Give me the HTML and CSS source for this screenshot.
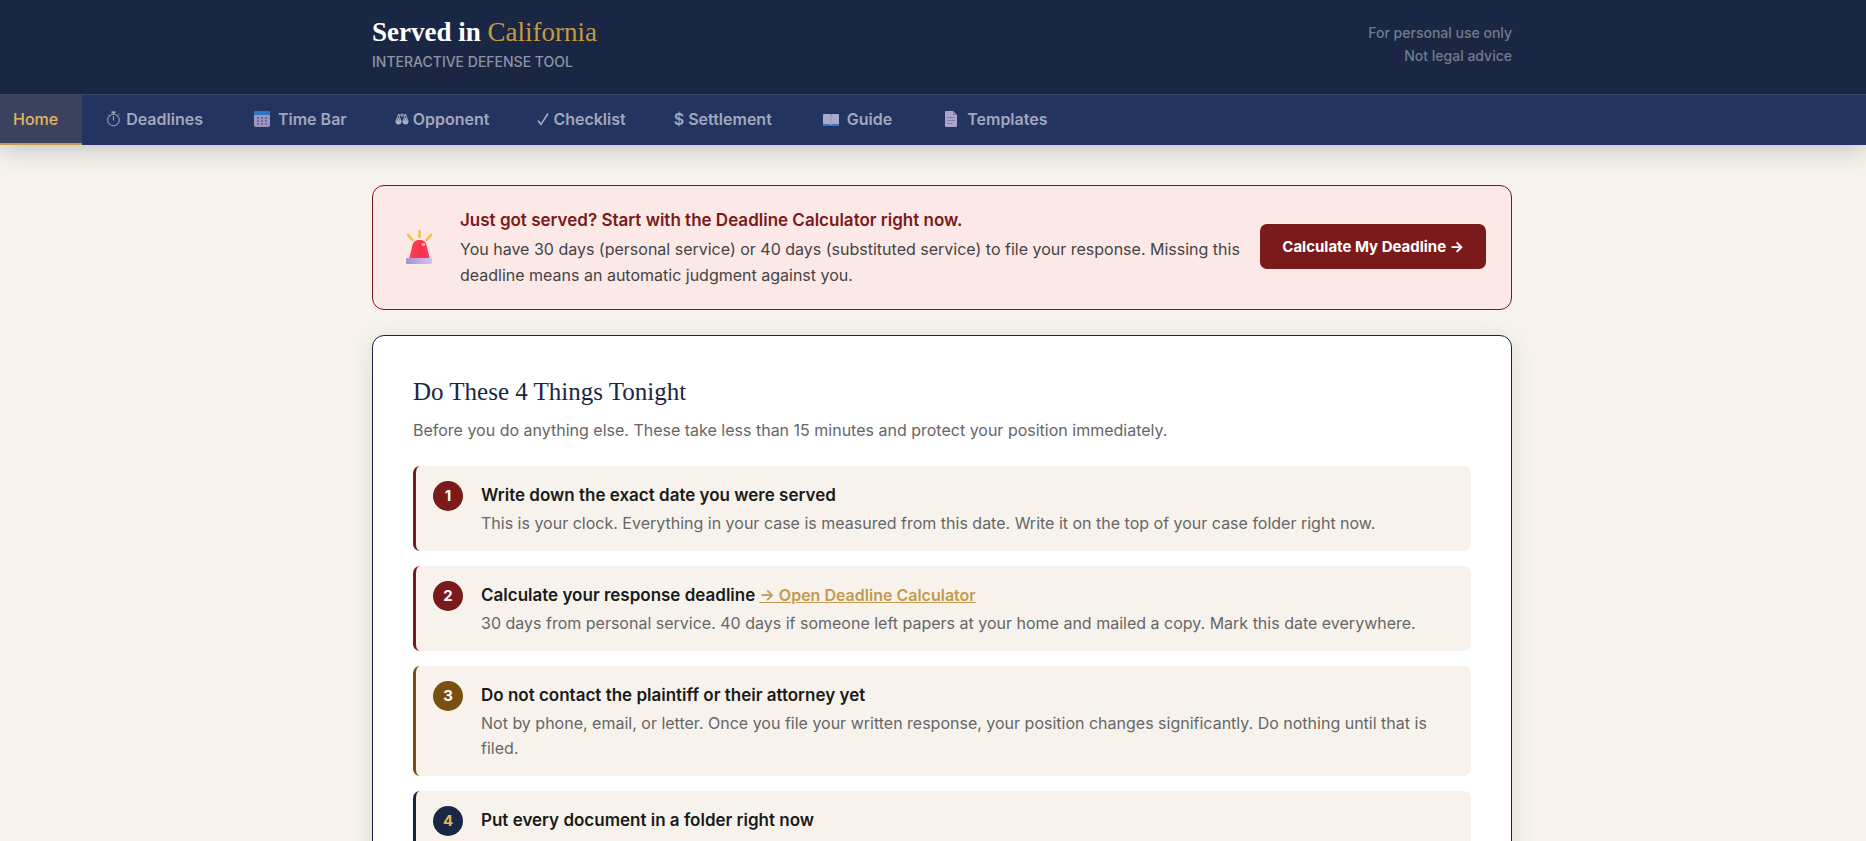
FILE: index.html
```html
<!DOCTYPE html>
<html lang="en">
<head>
    <meta charset="UTF-8">
    <meta name="viewport" content="width=device-width, initial-scale=1.0">
    <title>Served in California</title>
    <link rel="stylesheet" href="styles.css">
</head>
<body>
    <header class="site-header">
        <div class="header-inner">
            <div>
                <div class="logo">Served in <span>California</span></div>
                <div class="tagline">Interactive Defense Tool</div>
            </div>
            <div class="header-note">For personal use only<br>Not legal advice</div>
        </div>
        <nav class="tabs">
            <button class="tab active">Home</button>
            <button class="tab">
                <svg class="icon-sm" width="16" height="16" viewBox="0 0 16 16" fill="none" stroke="#a7aec0"><circle cx="7.5" cy="9" r="5.8"/><path d="M7.5 9.5V5M7.5 3V1.5M11.8 4.6l1.4-1.4M3.3 4.6l-1-1"/><path d="M5.5 1.3h4" stroke-width="1.8"/></svg>
                Deadlines
            </button>
            <button class="tab">
                <svg class="icon-lg" width="22" height="18" viewBox="0 0 22 18"><rect x="3" y="1" width="16" height="16" rx="2" fill="#9c94bd"/><path d="M3 5V3a2 2 0 0 1 2-2h12a2 2 0 0 1 2 2v2z" fill="#2b78c5"/><g fill="#716d9d"><path d="M6 7h2v2H6zM10 7h2v2h-2zM14 7h2v2h-2zM6 10h2v2H6zM10 10h2v2h-2zM14 10h2v2h-2zM6 13h2v2H6zM10 13h2v2h-2zM14 13h2v2h-2z"/></g></svg>
                Time Bar
            </button>
            <button class="tab">
                <svg class="icon-sm" width="14" height="14" viewBox="0 0 14 14" fill="#a7aec0"><path d="M3.5 3h7M7 1.5V5M3.5 2L1 9.5M3.5 2L6 9.5M10.5 2L8 9.5M10.5 2L13 9.5" fill="none" stroke="#a7aec0"/><path d="M.5 8.5h6c0 3-1 4-3 4s-3-1-3-4zM7.5 8.5h6c0 3-1 4-3 4s-3-1-3-4zM2.5 6h2v3h-2zM9.5 6h2v3h-2z"/></svg>
                Opponent
            </button>
            <button class="tab">
                <svg class="icon-sm" width="12" height="14" viewBox="0 0 12 14" fill="none" stroke="#a7aec0" stroke-width="1.5"><path d="M1 8.5l3 4L11 1.5"/></svg>
                Checklist
            </button>
            <button class="tab">$ Settlement</button>
            <button class="tab">
                <svg class="icon-lg" width="22" height="16" viewBox="0 0 22 16"><path d="M3 4h16v11H3z" fill="#3079b8"/><path d="M4 3h6l1 1 1-1h6a1 1 0 0 1 1 1v9h-7l-1 1-1-1H3V4a1 1 0 0 1 1-1z" fill="#aaa8cd"/><path d="M10 3.5h2v10h-2z" fill="#a0a0c1"/></svg>
                Guide
            </button>
            <button class="tab">
                <svg class="icon-lg" width="22" height="18" viewBox="0 0 22 18"><path d="M5 2a1 1 0 0 1 1-1h7l4 4v11a1 1 0 0 1-1 1H6a1 1 0 0 1-1-1z" fill="#a9a5cc"/><path d="M13 1v4h4z" fill="#8580aa"/><path d="M7 7.5h8M7 10.5h8M7 13.5h5" stroke="#827da8"/></svg>
                Templates
            </button>
        </nav>
    </header>

    <main class="content">
        <section class="alert">
            <svg class="siren" width="32" height="38" viewBox="0 0 32 38">
                <defs>
                    <linearGradient id="dome" x1="0" x2="1"><stop offset="0" stop-color="#ff4258"/><stop offset="0.6" stop-color="#f92f49"/><stop offset="1" stop-color="#ef4770"/></linearGradient>
                    <linearGradient id="base" x1="0" x2="1"><stop offset="0" stop-color="#a893c6"/><stop offset="1" stop-color="#d3c3f5"/></linearGradient>
                </defs>
                <path d="M5 7l4.500 5M16.500 3v6M28 7l-4.500 5" stroke="#f6bf43" stroke-width="2.600" stroke-linecap="round"/>
                <path d="M6 31l3.500-14q1-5 7-5t7 5L27 31z" fill="url(#dome)"/>
                <ellipse cx="20.500" cy="16.500" rx="2" ry="1.800" fill="#ff9dab"/>
                <rect x="3" y="30" width="26" height="6" rx="1" fill="url(#base)"/>
            </svg>
            <div class="alert-text">
                <h2>Just got served? Start with the Deadline Calculator right now.</h2>
                <p>You have 30 days (personal service) or 40 days (substituted service) to file your response. Missing this deadline means an automatic judgment against you.</p>
            </div>
            <button class="alert-btn">Calculate My Deadline →</button>
        </section>

        <section class="card">
            <h1>Do These 4 Things Tonight</h1>
            <p class="intro">Before you do anything else. These take less than 15 minutes and protect your position immediately.</p>

            <div class="steps">
                <div class="step">
                    <div class="num">1</div>
                    <div>
                        <h3>Write down the exact date you were served</h3>
                        <p>This is your clock. Everything in your case is measured from this date. Write it on the top of your case folder right now.</p>
                    </div>
                </div>
                <div class="step">
                    <div class="num">2</div>
                    <div>
                        <h3>Calculate your response deadline <a href="#deadlines">→ Open Deadline Calculator</a></h3>
                        <p>30 days from personal service. 40 days if someone left papers at your home and mailed a copy. Mark this date everywhere.</p>
                    </div>
                </div>
                <div class="step amber">
                    <div class="num">3</div>
                    <div>
                        <h3>Do not contact the plaintiff or their attorney yet</h3>
                        <p>Not by phone, email, or letter. Once you file your written response, your position changes significantly. Do nothing until that is filed.</p>
                    </div>
                </div>
                <div class="step navy">
                    <div class="num">4</div>
                    <div>
                        <h3>Put every document in a folder right now</h3>
                    </div>
                </div>
            </div>
        </section>
    </main>
</body>
</html>
```
FILE: styles.css
```css
* {
    box-sizing: border-box;
    margin: 0;
    padding: 0;
}
body {
    font-family: Inter, "Liberation Sans", sans-serif;
    font-size: 16px;
    background: #f7f3ec;
    color: #1a1a1a;
    height: 100vh;
    overflow: hidden;
}
button {
    font-family: inherit;
    border: none;
    cursor: pointer;
}
.site-header {
    position: relative;
    background: #1a2744;
    box-shadow: 0 4px 24px rgba(26, 39, 68, 0.25);
}
.header-inner {
    max-width: 1158px;
    margin: 0 auto;
    padding: 14px 0 20px 18px;
    display: flex;
    justify-content: space-between;
    align-items: center;
}
.logo {
    font-family: "Liberation Serif", serif;
    font-size: 27px;
    font-weight: 700;
    line-height: 36px;
    color: white;
}
.logo span {
    font-weight: 400;
    color: #c49a3c;
}
.tagline {
    font-size: 14px;
    font-weight: 500;
    line-height: 24px;
    color: #8c93a2;
    text-transform: uppercase;
}
.header-note {
    font-size: 14px;
    font-weight: 500;
    line-height: 23px;
    text-align: right;
    color: #727b8d;
}
.tabs {
    display: flex;
    height: 51px;
    background: #243460;
    border-top: 1px solid #3a4668;
    overflow: hidden;
}
.tab {
    display: flex;
    align-items: center;
    padding: 0 24px;
    background: none;
    border-bottom: 2px solid transparent;
    color: #a1a8bc;
    font-size: 16px;
    font-weight: 600;
    white-space: nowrap;
}
.tab svg {
    flex: none;
}
.tab.active {
    padding-left: 13px;
    background: #3c425e;
    color: #e0b565;
    font-weight: 500;
    border-bottom-color: #c49a4c;
}
.icon-sm {
    margin-right: 4px;
}
.icon-lg {
    margin-right: 5px;
}
.content {
    max-width: 1158px;
    margin: 0 auto;
    padding: 40px 0 40px 18px;
}
.alert {
    display: flex;
    align-items: center;
    gap: 14px;
    padding: 19px 25px 21px;
    margin-bottom: 25px;
    background: #fce8e6;
    border: 1px solid #7a1a1a;
    border-radius: 12px;
}
.siren {
    flex: none;
    margin: 0 11px 0 5px;
}
.alert-text {
    flex: 1;
}
.alert h2 {
    margin-bottom: 1px;
    font-size: 17px;
    font-weight: 600;
    line-height: 30px;
    color: #7a1a1a;
}
.alert p {
    line-height: 26px;
    color: #444;
}
.alert-btn {
    flex: none;
    padding: 0 22px;
    line-height: 45px;
    border-radius: 7px;
    background: #7a1a1a;
    color: white;
    font-size: 15px;
    font-weight: 700;
}
.card {
    padding: 36px 40px 40px;
    background: white;
    border: 1px solid #1a2744;
    border-radius: 12px;
    box-shadow: 0 4px 24px rgba(26, 39, 68, 0.12);
}
.card h1 {
    font-family: "Liberation Serif", serif;
    font-size: 25px;
    font-weight: 400;
    line-height: 40px;
    color: #1a2744;
}
.intro {
    margin: 5px 0 22px;
    line-height: 27px;
    color: #666;
}
.steps {
    display: flex;
    flex-direction: column;
    gap: 15px;
}
.step {
    display: flex;
    gap: 18px;
    padding: 15px 17px;
    background: #f7f3ec;
    border-left: 3px solid #7a1a1a;
    border-radius: 7px;
}
.num {
    flex: none;
    width: 30px;
    height: 30px;
    line-height: 30px;
    border-radius: 50%;
    text-align: center;
    font-size: 15px;
    font-weight: 700;
    background: #7a1a1a;
    color: white;
}
.step h3 {
    margin-bottom: 2px;
    font-size: 17px;
    font-weight: 600;
    line-height: 28px;
}
.step p {
    line-height: 25px;
    color: #666;
}
.step a {
    font-size: 16px;
    color: #c49a4c;
}
.step.amber {
    border-color: #7a5010;
}
.step.amber .num {
    background: #7a5010;
}
.step.navy {
    border-color: #1a2744;
}
.step.navy .num {
    background: #1a2744;
    color: #e0b565;
}
```
